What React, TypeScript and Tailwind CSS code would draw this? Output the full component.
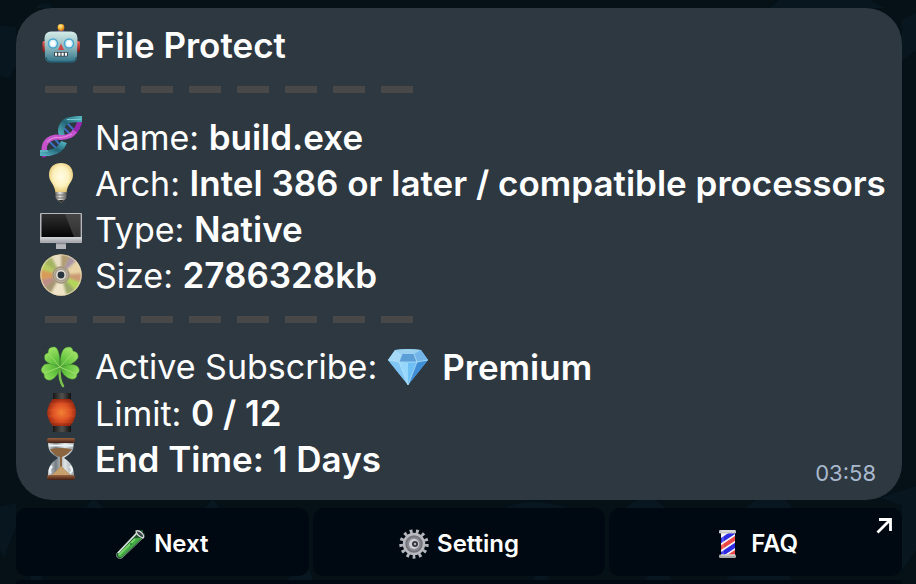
import type { ReactNode } from "react";

function Robot() {
  return (
    <svg viewBox="0 0 42 42" className="size-[42px] shrink-0" aria-hidden="true">
      <defs>
        <linearGradient id="robotFace" x1="0" y1="0" x2="0" y2="1">
          <stop offset="0" stopColor="#d5ebe8" />
          <stop offset="0.5" stopColor="#8fb9bd" />
          <stop offset="1" stopColor="#2f7187" />
        </linearGradient>
        <linearGradient id="robotEar" x1="0" y1="0" x2="0" y2="1">
          <stop offset="0" stopColor="#f0625b" />
          <stop offset="1" stopColor="#7e1416" />
        </linearGradient>
        <radialGradient id="robotBulb" cx="0.4" cy="0.3" r="0.8">
          <stop offset="0" stopColor="#fff0a0" />
          <stop offset="0.5" stopColor="#f5b02c" />
          <stop offset="1" stopColor="#b85a12" />
        </radialGradient>
      </defs>
      <rect x="2.5" y="17" width="4" height="11" rx="1.5" fill="url(#robotEar)" />
      <rect x="36" y="17" width="4" height="11" rx="1.5" fill="url(#robotEar)" />
      <path d="M17 9 Q17 5.5 21 5.5 Q25 5.5 25 9Z" fill="#574a86" />
      <circle cx="21" cy="3.5" r="3.4" fill="url(#robotBulb)" />
      <path d="M11 7.5H31Q37 7.5 37.5 14L37 33Q36.500 38.500 31 38.500H11Q5.500 38.500 5 33L4.500 14Q5 7.500 11 7.500Z" fill="url(#robotFace)" />
      <path d="M6 33Q7 38 12 38H30Q35 38 36.500 33" fill="none" stroke="#1f5062" strokeWidth="1" />
      <circle cx="13" cy="19.500" r="5.200" fill="#48a5cf" />
      <circle cx="29" cy="19.500" r="5.200" fill="#48a5cf" />
      <circle cx="13" cy="19.500" r="3.700" fill="#d9f3fa" />
      <circle cx="29" cy="19.500" r="3.700" fill="#d9f3fa" />
      <circle cx="13" cy="19.500" r="2.200" fill="#fff" />
      <circle cx="29" cy="19.500" r="2.200" fill="#fff" />
      <path d="M21 19.500 24 26H18Z" fill="#d0434a" />
      <rect x="14" y="28" width="14" height="4.500" rx="1.200" fill="#39444d" />
      <path d="M15 30.200H27.500" stroke="#fff" strokeWidth="3" strokeDasharray="2.100 1.200" />
    </svg>
  );
}

function Dna() {
  return (
    <svg viewBox="0 0 42 42" className="size-[42px] shrink-0" aria-hidden="true">
      <defs>
        <linearGradient id="dnaTeal" x1="0" y1="1" x2="1" y2="0">
          <stop offset="0" stopColor="#51aebc" />
          <stop offset="0.5" stopColor="#236577" />
          <stop offset="1" stopColor="#50b3bd" />
        </linearGradient>
      </defs>
      <path d="M8 24 18 34M13 21 21 30M22 10 32 20M27 7 36 16" stroke="#3c6fc4" strokeWidth="2" />
      <path d="M5 41Q3 36 5 31" fill="none" stroke="#a128b4" strokeWidth="5" />
      <path d="M40 0Q41 8 34 17" fill="none" stroke="#9827b0" strokeWidth="5" />
      <path d="M0 37H9Q21 35 24 26" fill="none" stroke="url(#dnaTeal)" strokeWidth="6" />
      <path d="M22 20Q19 12 25 6Q29 3 42 3" fill="none" stroke="url(#dnaTeal)" strokeWidth="6" />
      <path d="M4 34Q4 23 16 21Q30 23 35 15" fill="none" stroke="#c453cb" strokeWidth="5" />
      <path d="M7 26Q12 21 18 21.500T32 18" fill="none" stroke="#e084dd" strokeWidth="1.200" />
      <path d="M0 35H8M27 3.500H41" stroke="#79cbd1" strokeWidth="1" />
    </svg>
  );
}

function Bulb() {
  return (
    <svg viewBox="0 0 42 42" className="size-[42px] shrink-0" aria-hidden="true">
      <defs>
        <radialGradient id="bulbGlow" cx="0.5" cy="0.45" r="0.6">
          <stop offset="0" stopColor="#fffce6" />
          <stop offset="0.550" stopColor="#fcf1bd" />
          <stop offset="1" stopColor="#dfbd62" />
        </radialGradient>
        <linearGradient id="bulbBase">
          <stop offset="0" stopColor="#6e6d6b" />
          <stop offset="0.400" stopColor="#e8e7e3" />
          <stop offset="1" stopColor="#5c5b59" />
        </linearGradient>
      </defs>
      <path d="M9 13C9 5 14 1 21 1S33 5 33 13C33 20 27 22 26.500 31H15.500C15 22 9 20 9 13Z" fill="url(#bulbGlow)" />
      <path d="M15.500 30H26.500V36L24 38.500 21 40.500 18 38.500 15.500 36Z" fill="url(#bulbBase)" />
      <path d="M15.500 33H26.500M16 36H26" stroke="#77736c" />
      <path d="M18 38H24L22 40H20Z" fill="#353330" />
    </svg>
  );
}

function Monitor() {
  return (
    <svg viewBox="0 0 42 42" className="size-[42px] shrink-0" aria-hidden="true">
      <defs>
        <linearGradient id="screenDark" x1="0" y1="0" x2="0" y2="1">
          <stop offset="0" stopColor="#303030" />
          <stop offset="1" stopColor="#050505" />
        </linearGradient>
        <linearGradient id="screenMetal" x1="0" y1="0" x2="0" y2="1">
          <stop offset="0" stopColor="#d4d6da" />
          <stop offset="1" stopColor="#a1a3a8" />
        </linearGradient>
      </defs>
      <path d="M16 33H26V41H16Z" fill="#b4b6ba" />
      <rect x="0" y="5" width="42" height="30" rx="1" fill="#b5b7bb" />
      <rect x="1.500" y="6" width="39" height="23" fill="url(#screenDark)" />
      <path d="M25 6H40.500V29H34Z" fill="#5b5b5b" opacity=".5" />
      <path d="M0 29H42V34.500H0Z" fill="url(#screenMetal)" />
      <path d="M16 35.500H26" stroke="#85888d" strokeWidth="1.500" />
    </svg>
  );
}

function Disc() {
  return (
    <svg viewBox="0 0 42 42" className="size-[42px] shrink-0" aria-hidden="true">
      <defs>
        <filter id="discBlend" x="-10%" y="-10%" width="120%" height="120%">
          <feGaussianBlur stdDeviation="1.100" />
        </filter>
        <clipPath id="discEdge">
          <circle cx="21" cy="21" r="20.500" />
        </clipPath>
      </defs>
      <circle cx="21" cy="21" r="20.800" fill="#cfbe92" />
      <g clipPath="url(#discEdge)">
        <g filter="url(#discBlend)">
          <path d="M21 21 10 0H21Z" fill="#e9dfc2" />
          <path d="M21 21 1 7 10 0Z" fill="#a4b562" />
          <path d="M21 21-2 15 1 7Z" fill="#b8cc60" />
          <path d="M21 21-1 27-2 15Z" fill="#d79c58" />
          <path d="M21 21 2 35-1 27Z" fill="#bd8d87" />
          <path d="M21 21 9 42 2 35Z" fill="#a69673" />
          <path d="M21 21 27 43H9Z" fill="#efe4c7" />
          <path d="M21 21 37 38 27 43Z" fill="#9ba86b" />
          <path d="M21 21 43 29 37 38Z" fill="#b3d659" />
          <path d="M21 21 43 19V29Z" fill="#cc9a74" />
          <path d="M21 21 38 5 43 19Z" fill="#e7d3a4" />
          <path d="M21 21 31-1 38 5Z" fill="#aa97a6" />
          <path d="M21 21V-1H31Z" fill="#b29e72" />
        </g>
      </g>
      <circle cx="21" cy="21" r="20" fill="none" stroke="#ebddb9" strokeWidth="1.200" opacity=".6" />
      <circle cx="21" cy="21" r="9" fill="#b9a98c" opacity=".8" />
      <circle cx="21" cy="21" r="8" fill="none" stroke="#918778" strokeWidth="0.800" />
      <circle cx="21" cy="21" r="6.300" fill="#a5a198" />
      <circle cx="21" cy="21" r="4.200" fill="#293640" stroke="#e6e1d2" strokeWidth="1.500" />
    </svg>
  );
}

function Clover() {
  return (
    <svg viewBox="0 0 42 42" className="size-[42px] shrink-0" aria-hidden="true">
      <defs>
        <radialGradient id="leafGreen" gradientUnits="userSpaceOnUse" cx="20" cy="21" r="20">
          <stop offset="0" stopColor="#4aa636" />
          <stop offset="0.500" stopColor="#6cc944" />
          <stop offset="1" stopColor="#99df63" />
        </radialGradient>
      </defs>
      <path d="M19.500 21Q19 34 23 40" fill="none" stroke="#78c04b" strokeWidth="2.500" strokeLinecap="round" />
      <g fill="url(#leafGreen)" stroke="#46972f" strokeWidth="0.500">
        <path d="M20 21Q9 19 5 14Q3 8 8 7Q8 0 15 1Q20 3 20 21Z" />
        <path d="M20 21Q20 5 25 2Q32-1 33 5Q39 6 38 12Q34 19 20 21Z" />
        <path d="M20 21Q6 15 3 20Q-1 25 4 28Q4 35 11 34Q18 31 20 21Z" />
        <path d="M20 21Q34 16 38 21Q41 25 37 28Q37 34 31 33Q23 31 20 21Z" />
      </g>
      <path d="M9 8 20 21 33 7M5 27 20 21 36 28" fill="none" stroke="#a4df72" strokeWidth="0.900" />
    </svg>
  );
}

function Lantern() {
  return (
    <svg viewBox="0 0 42 42" className="size-[42px] shrink-0" aria-hidden="true">
      <defs>
        <radialGradient id="lanternGlow">
          <stop offset="0" stopColor="#f28235" />
          <stop offset="0.600" stopColor="#df5224" />
          <stop offset="1" stopColor="#9d2b13" />
        </radialGradient>
        <linearGradient id="lanternCap">
          <stop offset="0" stopColor="#171716" />
          <stop offset="0.500" stopColor="#53514d" />
          <stop offset="1" stopColor="#111" />
        </linearGradient>
      </defs>
      <rect x="13" y="1" width="18" height="8" fill="url(#lanternCap)" />
      <rect x="13" y="32" width="18" height="8" fill="url(#lanternCap)" />
      <path d="M13 7H30Q36 12 36 21Q35 29 30 34H13Q8 29 7 21Q8 12 13 7Z" fill="url(#lanternGlow)" />
      <path d="M8 18H35M8 24H35M10 12H33M10 30H33" stroke="#ee7232" strokeWidth="0.500" opacity=".5" />
    </svg>
  );
}

function Hourglass() {
  return (
    <svg viewBox="0 0 42 42" className="size-[42px] shrink-0" aria-hidden="true">
      <defs>
        <linearGradient id="woodCap" x1="0" y1="0" x2="0" y2="1">
          <stop offset="0" stopColor="#9a6240" />
          <stop offset="1" stopColor="#431f13" />
        </linearGradient>
        <linearGradient id="glassBody">
          <stop offset="0" stopColor="#d2d8db" />
          <stop offset="0.300" stopColor="#747d83" />
          <stop offset="0.650" stopColor="#dfe3e4" />
          <stop offset="1" stopColor="#9ea7ad" />
        </linearGradient>
      </defs>
      <path d="M8 4H34C34 14 30 16 24 20C31 25 34 28 34 38H8C8 28 11 25 18 20C12 16 8 14 8 4Z" fill="url(#glassBody)" />
      <path d="M10 11Q21 9 32 11Q29 16 22 19V29L30 37H12L20 29V19Q12 16 10 11Z" fill="#8b6440" />
      <path d="M21 28Q26 33 30 37H12Q16 33 21 28Z" fill="#c7a06c" />
      <path d="M9 7.500H33M11 35Q8 33 12 28M30 35Q34 33 30 28" fill="none" stroke="#eef5f6" strokeWidth="2.200" />
      <rect x="7" y="0" width="28" height="5" rx="2" fill="url(#woodCap)" />
      <rect x="7" y="37" width="28" height="5" rx="2" fill="url(#woodCap)" />
    </svg>
  );
}

function Diamond() {
  return (
    <svg viewBox="0 0 42 42" className="size-[42px] shrink-0" aria-hidden="true">
      <path d="M8 4Q21 2 34 4L41 14 21 39 1 14Z" fill="#69b8ee" />
      <path d="M1 14 12 16 21 39Z" fill="#80c5f3" />
      <path d="M12 16H30L21 39Z" fill="#6fc0f4" />
      <path d="M30 16 41 14 21 39Z" fill="#408ed5" />
      <path d="M21 17V39L12 16Z" fill="#97d7fb" />
      <path d="M8 4 15 8 12 16 1 14Z" fill="#a5d9f5" />
      <path d="M15 8H27L30 16H12Z" fill="#5c9fd6" />
      <path d="M34 4 27 8 30 16 41 14Z" fill="#73b5e8" />
      <path d="M8 4Q21 2 34 4L27 8H15Z" fill="#9cd0ef" />
      <path d="M1 14 12 16H30L41 14M15 8 12 16 21 39 30 16 27 8" fill="none" stroke="#bbe5fa" strokeWidth="0.700" />
    </svg>
  );
}

function TestTube() {
  return (
    <svg viewBox="0 0 30 30" className="size-[30px] shrink-0" aria-hidden="true">
      <path d="M21 3 27 9 6 29Q3 31 1 28Q-1 26 1 24Z" fill="#24532e" stroke="#9baaa2" strokeWidth="0.700" />
      <path d="M19 9H26L6 28Q4 29 2 27Q1 26 3 24Z" fill="#43a944" />
      <path d="M3 26 19 10" stroke="#77d56b" strokeWidth="1.800" />
      <path d="M2 24 21 4" stroke="#e6eee8" strokeWidth="1.200" />
      <path d="M20 2Q23 1 26 4Q29 7 27 9Q24 8 22 6Q20 4 20 2Z" fill="#3b4849" stroke="#d8dcdb" strokeWidth="1.300" />
      <circle cx="26" cy="2" r="1" fill="#267a38" />
      <circle cx="28" cy="5" r="0.700" fill="#267a38" />
      <circle cx="15" cy="15" r="1" fill="#227b2b" />
    </svg>
  );
}

function Gear() {
  return (
    <svg viewBox="0 0 30 30" className="size-[30px] shrink-0" aria-hidden="true">
      <circle cx="15" cy="15" r="12.700" fill="none" stroke="#b4b5bb" strokeWidth="4" strokeDasharray="2.800 3.338" />
      <circle cx="15" cy="15" r="10" fill="#74757b" stroke="#b9bac0" strokeWidth="2.500" />
      <circle cx="15" cy="15" r="7.300" fill="#8d8e95" stroke="#74757c" />
      <circle cx="15" cy="15" r="5" fill="#d0d0d6" />
      <circle cx="16" cy="15" r="3" fill="#34353d" />
      <circle cx="16" cy="15" r="1.200" fill="#b5b5be" />
    </svg>
  );
}

function BarberPole() {
  return (
    <svg viewBox="0 0 30 30" className="size-[30px] shrink-0" aria-hidden="true">
      <defs>
        <clipPath id="poleGlass">
          <rect x="8" y="4" width="14" height="23" />
        </clipPath>
      </defs>
      <g clipPath="url(#poleGlass)">
        <rect x="8" y="4" width="14" height="23" fill="#f8f5f9" />
        <path d="M6 13 24 1M6 27 24 15" stroke="#2c2be2" strokeWidth="4.500" />
        <path d="M6 20 24 8M6 34 24 22" stroke="#eb4644" strokeWidth="4" />
        <path d="M10 4V27" stroke="#fff" strokeWidth="0.700" opacity=".5" />
      </g>
      <rect x="6" y="1" width="17" height="3.500" rx="1.300" fill="#c9c7c7" />
      <rect x="6" y="25.500" width="17" height="3.500" rx="1.300" fill="#aaa9a8" />
      <path d="M8 2H22M8 26H22" stroke="#eee" strokeWidth="0.900" />
    </svg>
  );
}

function Row({ icon, children }: { icon: ReactNode; children: ReactNode }) {
  return (
    <div className="flex h-[46px] items-center gap-[13px] whitespace-nowrap">
      {icon}
      <p>{children}</p>
    </div>
  );
}

function Value({ children }: { children: ReactNode }) {
  return <strong className="text-[35px] font-[560]">{children}</strong>;
}

function Divider() {
  return (
    <div role="separator" className="flex h-[46px] gap-4 pt-[18px] pl-[5px]">
      {Array.from({ length: 8 }, (_, i) => (
        <span key={i} className="h-[7px] w-8 bg-[#484848]" />
      ))}
    </div>
  );
}

function ActionButton({ icon, label, external = false }: { icon: ReactNode; label: string; external?: boolean }) {
  return (
    <button type="button" className="relative flex h-[68px] flex-1 items-center justify-center gap-2 rounded-[10px] bg-[#000911] pt-[3px] text-2xl font-semibold">
      {icon}
      <span>{label}</span>
      {external && (
        <svg viewBox="0 0 16 16" className="absolute top-[10px] right-[10px] size-4" fill="none" stroke="#fff" strokeWidth="2.800" aria-hidden="true">
          <path d="M3 1.500H14.500V13M14 2 1.500 14.500" />
        </svg>
      )}
    </button>
  );
}

export default function App() {
  return (
    <main className="relative isolate min-h-screen overflow-hidden bg-[#061117] pt-2 pr-[14px] pl-4 font-['Inter','Liberation_Sans',sans-serif] text-white">
      <svg className="absolute inset-0 -z-10 h-full w-full" preserveAspectRatio="none" viewBox="0 0 916 584" fill="#08161f" aria-hidden="true">
        <path d="M0 25 16 27V65L9 79 0 75ZM40 4 50 3 52 8H36ZM780 0H870L885 8H770ZM902 20 916 13V50L902 61Z" />
        <path d="M0 507 16 503V526L4 557 0 549ZM86 508 93 498 104 508ZM205 508 213 498 219 508ZM505 508Q530 496 568 508ZM625 508Q638 496 655 499L665 508ZM745 508 758 498H783L793 508ZM880 498 916 486V550L902 570V505Z" />
        <path d="M31 576H42V580H31ZM292 576 309 569 313 580H286ZM535 576H548V580H533ZM648 576H670V580H645ZM730 576H790V580H725Z" />
      </svg>
      <section className="relative rounded-[36px] bg-[#2d3841] px-6 pt-[14px] pb-[18px] text-[34px] leading-[46px]">
        <Row icon={<Robot />}><Value>File Protect</Value></Row>
        <Divider />
        <Row icon={<Dna />}>Name: <Value>build.exe</Value></Row>
        <Row icon={<Bulb />}>Arch: <Value>Intel 386 or later / compatible processors</Value></Row>
        <Row icon={<Monitor />}>Type: <Value>Native</Value></Row>
        <Row icon={<Disc />}>Size: <Value>2786328kb</Value></Row>
        <Divider />
        <div className="flex items-center gap-[10px]">
          <Row icon={<Clover />}>Active Subscribe:</Row>
          <Row icon={<Diamond />}><Value>Premium</Value></Row>
        </div>
        <Row icon={<Lantern />}>Limit: <Value>0 / 12</Value></Row>
        <Row icon={<Hourglass />}><Value>End Time: 1 Days</Value></Row>
        <time className="absolute right-[26px] bottom-[14px] text-[22px] leading-[26px] text-[#a9b8cc]">03:58</time>
      </section>
      <nav className="mt-2 flex gap-1" aria-label="File actions">
        <ActionButton icon={<TestTube />} label="Next" />
        <ActionButton icon={<Gear />} label="Setting" />
        <ActionButton icon={<BarberPole />} label="FAQ" external />
      </nav>
      <div className="mt-1 h-1 rounded-t-[10px] bg-[#000911]" />
    </main>
  );
}
